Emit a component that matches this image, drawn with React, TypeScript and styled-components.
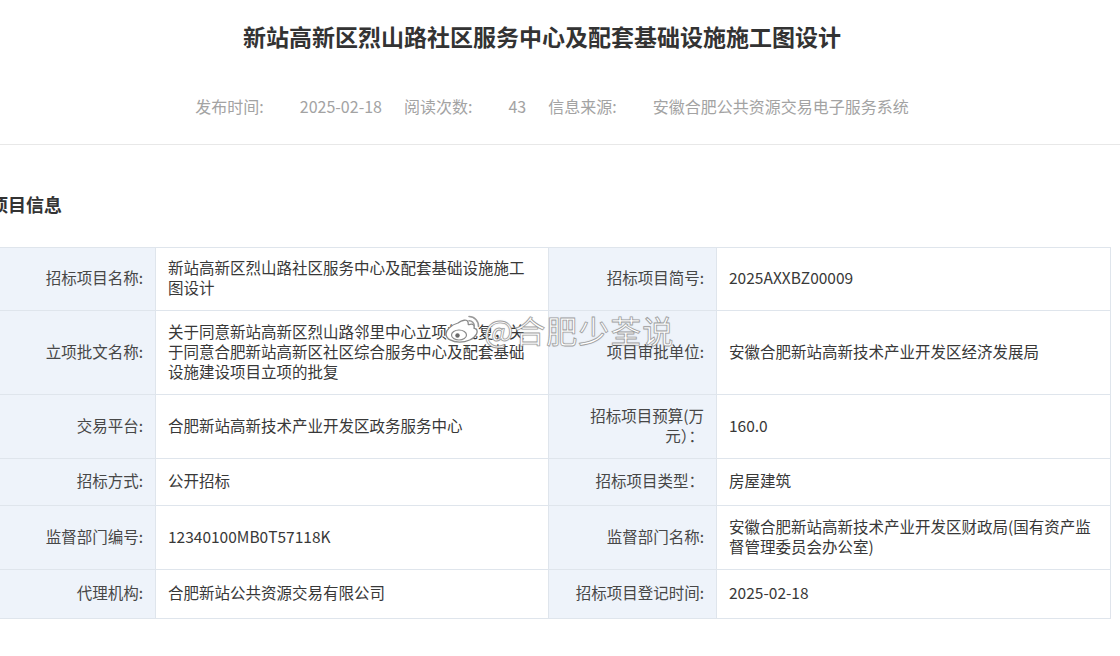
import React from 'react';
import styled, { createGlobalStyle } from 'styled-components';

const GlobalStyle = createGlobalStyle`
  html, body {
    margin: 0;
    padding: 0;
    background: #ffffff;
  }
  body {
    font-family: "Noto Sans CJK SC", "Noto Sans", sans-serif;
  }
`;

const Page = styled.div`
  position: relative;
  width: 1120px;
  height: 656px;
  overflow: hidden;
  background: #ffffff;
`;

const Header = styled.header`
  height: 145px;
  box-sizing: border-box;
  border-bottom: 1px solid #e8e8e8;
`;

const Title = styled.h1`
  margin: 0;
  padding: 20px 36px 0 0;
  font-size: 23px;
  line-height: 32px;
  font-weight: 700;
  color: #333333;
  text-align: center;
`;

const Meta = styled.div`
  display: flex;
  justify-content: center;
  margin-top: 42px;
  padding-right: 16px;
  font-size: 16px;
  line-height: 24px;
  color: #a3a3a3;
`;

const MetaLabel = styled.span`
  margin-right: 36px;
`;

const MetaValue = styled.span`
  margin-right: 22px;

  &:last-child {
    margin-right: 0;
  }
`;

const Content = styled.section`
  margin-left: -10px;
  width: 1120px;
`;

const SectionTitle = styled.h2`
  margin: 47px 0 0;
  font-size: 18px;
  line-height: 24px;
  font-weight: 700;
  color: #333333;
`;

const Table = styled.table`
  margin-top: 31px;
  width: 1120px;
  table-layout: fixed;
  border-collapse: collapse;
  border: 1px solid #dfe5ec;
  font-size: 15.5px;
  line-height: 20px;
`;

const Row = styled.tr<{ $h: number }>`
  height: ${p => p.$h}px;
`;

const Label = styled.td`
  padding: 9px 12px 13px;
  border: 1px solid #dfe5ec;
  background: #eef3fa;
  color: #474747;
  text-align: right;
  vertical-align: middle;
`;

const Value = styled.td`
  padding: 9px 12px 13px;
  border: 1px solid #dfe5ec;
  background: #ffffff;
  color: #383838;
  text-align: left;
  vertical-align: middle;
  word-break: break-all;
`;

const Watermark = styled.div`
  position: absolute;
  left: 444px;
  top: 312px;
  display: flex;
  align-items: center;
  gap: 2px;
  pointer-events: none;
`;

const MarkText = styled.span`
  font-size: 31px;
  line-height: 36px;
  font-weight: 400;
  color: #ffffff;
  -webkit-text-stroke: 0.8px rgba(130, 130, 130, 0.75);
  text-shadow: 0 0 2px rgba(0, 0, 0, 0.18);
  letter-spacing: 1px;
`;

const WeiboLogo = () => (
  <svg width="38" height="32" viewBox="0 0 38 32" fill="none">
    <path
      d="M14 9c4-3 9-4 10-1 .5 1.5-.3 3 1 2.6 4-1.3 6 .5 5 3.5 3 1 4 3 2.5 6-2.5 5-10 8-17 8S2 25 2 20c0-4 5-9 12-11z"
      fill="#ffffff"
      stroke="#8a8a8a"
      strokeWidth="1.3"
    />
    <ellipse cx="15" cy="21" rx="7.5" ry="5" fill="#ffffff" stroke="#8a8a8a" strokeWidth="1.2" />
    <circle cx="13.5" cy="21.5" r="2.2" fill="#6a6a6a" />
    <path d="M25 2.5a9.5 9.5 0 0 1 9.5 10" stroke="#9a9a9a" strokeWidth="1.6" strokeLinecap="round" />
    <path d="M25 6.8a5 5 0 0 1 5.2 5.2" stroke="#9a9a9a" strokeWidth="1.6" strokeLinecap="round" />
  </svg>
);

const rows: { h: number; cells: React.ReactNode[] }[] = [
  {
    h: 63,
    cells: [
      '招标项目名称:',
      '新站高新区烈山路社区服务中心及配套基础设施施工图设计',
      '招标项目简号:',
      '2025AXXBZ00009',
    ],
  },
  {
    h: 84,
    cells: [
      '立项批文名称:',
      '关于同意新站高新区烈山路邻里中心立项的批复，关于同意合肥新站高新区社区综合服务中心及配套基础设施建设项目立项的批复',
      '项目审批单位:',
      '安徽合肥新站高新技术产业开发区经济发展局',
    ],
  },
  {
    h: 64,
    cells: [
      '交易平台:',
      '合肥新站高新技术产业开发区政务服务中心',
      <>
        招标项目预算(万
        <br />
        元）：
      </>,
      '160.0',
    ],
  },
  { h: 47, cells: ['招标方式:', '公开招标', '招标项目类型：', '房屋建筑'] },
  {
    h: 64,
    cells: [
      '监督部门编号:',
      '12340100MB0T57118K',
      '监督部门名称:',
      '安徽合肥新站高新技术产业开发区财政局(国有资产监督管理委员会办公室)',
    ],
  },
  {
    h: 49,
    cells: ['代理机构:', '合肥新站公共资源交易有限公司', '招标项目登记时间:', '2025-02-18'],
  },
];

export default function App() {
  return (
    <Page>
      <GlobalStyle />
      <Header>
        <Title>新站高新区烈山路社区服务中心及配套基础设施施工图设计</Title>
        <Meta>
          <MetaLabel>发布时间:</MetaLabel>
          <MetaValue>2025-02-18</MetaValue>
          <MetaLabel>阅读次数:</MetaLabel>
          <MetaValue>43</MetaValue>
          <MetaLabel>信息来源:</MetaLabel>
          <MetaValue>安徽合肥公共资源交易电子服务系统</MetaValue>
        </Meta>
      </Header>
      <Content>
        <SectionTitle>项目信息</SectionTitle>
        <Table>
          <colgroup>
            <col style={{ width: 165 }} />
            <col style={{ width: 393 }} />
            <col style={{ width: 168 }} />
            <col style={{ width: 394 }} />
          </colgroup>
          <tbody>
            {rows.map((r, i) => (
              <Row key={i} $h={r.h}>
                <Label>{r.cells[0]}</Label>
                <Value>{r.cells[1]}</Value>
                <Label>{r.cells[2]}</Label>
                <Value>{r.cells[3]}</Value>
              </Row>
            ))}
          </tbody>
        </Table>
      </Content>
      <Watermark>
        <WeiboLogo />
        <MarkText>@合肥少荃说</MarkText>
      </Watermark>
    </Page>
  );
}
